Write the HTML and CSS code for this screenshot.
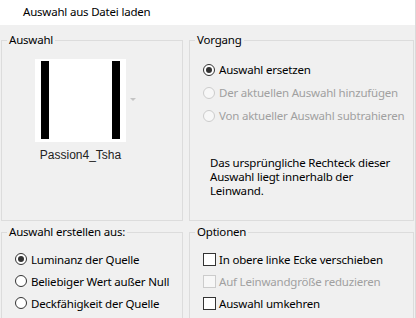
FILE: index.html
```html
<!DOCTYPE html>
<html>
<head>
  <title>Auswahl aus Datei laden</title>
  <link rel="stylesheet" href="styles.css">
</head>
<body>
  <div class="dialog">
    <div class="titlebar">Auswahl aus Datei laden</div>

    <div class="panes">
      <!-- Vorschau -->
      <fieldset class="group">
        <legend>Auswahl</legend>
        <div class="preview">
          <div class="thumb">
            <span class="bar"></span>
            <span class="bar"></span>
          </div>
          <span class="drop-arrow"></span>
          <div class="thumb-name">Passion4_Tsha</div>
        </div>
      </fieldset>

      <!-- Vorgang -->
      <fieldset class="group">
        <legend>Vorgang</legend>
        <div class="options">
          <label class="option"><span class="radio checked"></span>Auswahl ersetzen</label>
          <label class="option disabled"><span class="radio"></span>Der aktuellen Auswahl hinzufügen</label>
          <label class="option disabled"><span class="radio"></span>Von aktueller Auswahl subtrahieren</label>
        </div>
        <p class="note">Das ursprüngliche Rechteck dieser Auswahl liegt innerhalb der Leinwand.</p>
      </fieldset>

      <!-- Quelle -->
      <fieldset class="group">
        <legend>Auswahl erstellen aus:</legend>
        <div class="options options-low">
          <label class="option"><span class="radio checked"></span>Luminanz der Quelle</label>
          <label class="option"><span class="radio"></span>Beliebiger Wert außer Null</label>
          <label class="option"><span class="radio"></span>Deckfähigkeit der Quelle</label>
        </div>
      </fieldset>

      <!-- Optionen -->
      <fieldset class="group">
        <legend>Optionen</legend>
        <div class="options options-low">
          <label class="option"><span class="check"></span>In obere linke Ecke verschieben</label>
          <label class="option disabled"><span class="check"></span>Auf Leinwandgröße reduzieren</label>
          <label class="option"><span class="check"></span>Auswahl umkehren</label>
        </div>
      </fieldset>
    </div>
  </div>
</body>
</html>
```

FILE: styles.css
```css
body {
  margin: 0;
  background: #f0f0f0;
  font-family: "Noto Sans", "Open Sans", sans-serif;
  font-size: 11.5px;
  letter-spacing: -0.2px;
  color: #000;
}

.dialog {
  width: 416px;
  height: 318px;
  overflow: hidden;
  box-sizing: border-box;
  border-right: 1px solid #dadada;
}

.titlebar {
  height: 25px;
  line-height: 24px;
  padding-left: 23px;
  background: #fff;
}

.panes {
  display: grid;
  grid-template-columns: 182px 225px;
  grid-template-rows: 189px 120px;
  column-gap: 6px;
  row-gap: 3px;
  margin-top: 7px;
  padding-left: 1px;
}

.group {
  margin: 0;
  min-width: 0;
  padding: 0 5px;
  border: 1px solid #dcdcdc;
}

.group legend {
  padding: 0 2px;
  line-height: 16px;
}

/* preview */
.preview {
  position: relative;
  display: flex;
  flex-direction: column;
  align-items: center;
  width: 91px;
  margin: 11px 0 0 28px;
}

.thumb {
  display: flex;
  justify-content: space-between;
  box-sizing: border-box;
  width: 91px;
  height: 83px;
  padding: 2px 6px 3px 6px;
  background: #fff;
}

.bar {
  width: 8px;
  background: #000;
}

.drop-arrow {
  position: absolute;
  left: 95px;
  top: 39px;
  border-left: 3px solid transparent;
  border-right: 3px solid transparent;
  border-top: 3px solid #c4c4c4;
}

.thumb-name {
  margin-top: 5px;
  line-height: 16px;
  font-family: "Liberation Sans", Arial, sans-serif;
  font-size: 12px;
  letter-spacing: 0;
  color: #222;
}

/* radios and checkboxes */
.options {
  padding: 10px 0 0 8px;
}

.option {
  display: flex;
  align-items: center;
  height: 23px;
  white-space: nowrap;
}

.options-low {
  padding-top: 8px;
}

.options-low .option {
  height: 22px;
}

.radio {
  position: relative;
  flex: none;
  width: 12px;
  height: 12px;
  margin-right: 4px;
  box-sizing: border-box;
  border: 1px solid #333;
  border-radius: 50%;
  background: #fff;
}

.radio.checked::after {
  content: '';
  position: absolute;
  left: 2px;
  top: 2px;
  width: 6px;
  height: 6px;
  border-radius: 50%;
  background: #333;
}

.check {
  flex: none;
  width: 13px;
  height: 13px;
  margin-right: 3px;
  box-sizing: border-box;
  border: 1px solid #333;
  background: #fff;
}

.option.disabled {
  color: #a0a0a0;
}

.option.disabled .radio,
.option.disabled .check {
  border-color: #cccccc;
  background: #f7f7f7;
}

.note {
  width: 190px;
  margin: 29px 0 0 15px;
  line-height: 14px;
}
```
